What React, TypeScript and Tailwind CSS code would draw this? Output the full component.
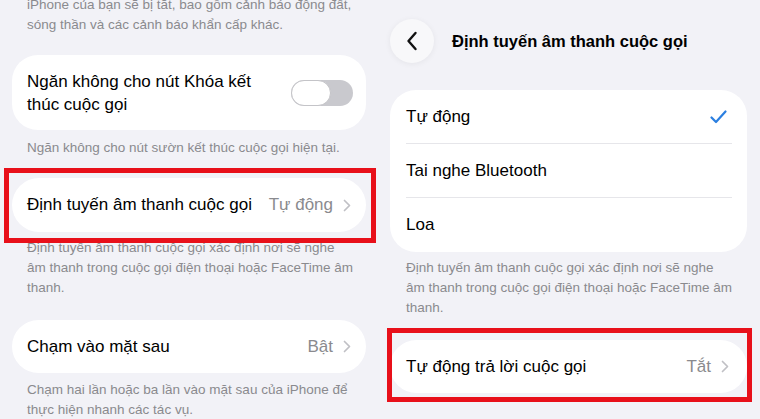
import { ReactNode } from "react";

const font = { fontFamily: "'Liberation Sans', Arial, sans-serif" };

function Chevron() {
  return (
    <svg width="8" height="13" viewBox="0 0 8 13" fill="none" className="shrink-0">
      <path d="M1.5 1.5 L6.5 6.5 L1.5 11.5" stroke="#c0c0c5" strokeWidth="1.7" strokeLinecap="round" strokeLinejoin="round" />
    </svg>
  );
}

function Note({ children, className = "" }: { children: ReactNode; className?: string }) {
  return (
    <p className={`whitespace-nowrap px-[15px] text-[13.5px] leading-[20px] text-[#8a8a8e] ${className}`}>{children}</p>
  );
}

function RedBox({ className }: { className: string }) {
  return <div className={`pointer-events-none absolute border-[5px] border-[#e8101a] ${className}`} />;
}

function LinkRow({ label, value }: { label: string; value: string }) {
  return (
    <div className="flex h-full items-center rounded-[27px] bg-white pl-[15px] pr-[15px]">
      <span className="text-[17px] text-black">{label}</span>
      <span className="ml-auto mr-[10px] text-[17px] text-[#8a8a8e]">{value}</span>
      <Chevron />
    </div>
  );
}

function Toggle() {
  return (
    <div className="relative h-[26px] w-[62px] shrink-0 rounded-full bg-[#c9c9ce]">
      <div className="absolute left-0 top-0 h-[26px] w-[40px] rounded-full border border-[#c4c4c8] bg-white" />
    </div>
  );
}

export default function App() {
  const options = ["Tự động", "Tai nghe Bluetooth", "Loa"];
  return (
    <div className="relative flex h-[419px] w-[760px] overflow-hidden bg-[#f2f2f7] antialiased" style={font}>
      {/* left screenshot */}
      <div className="w-[380px] shrink-0 pl-[12px] pr-[14px]">
        <Note className="-mt-[5px]">
          iPhone của bạn sẽ bị tắt, bao gồm cảnh báo động đất,
          <br />
          sóng thần và các cảnh báo khẩn cấp khác.
        </Note>
        <div className="mt-[20px] flex h-[75px] items-center rounded-[26px] bg-white pl-[15px] pr-[13px]">
          <span className="text-[17px] leading-[23px] text-black">
            Ngăn không cho nút Khóa kết
            <br />
            thúc cuộc gọi
          </span>
          <div className="ml-auto">
            <Toggle />
          </div>
        </div>
        <Note className="mt-[8px]">Ngăn không cho nút sườn kết thúc cuộc gọi hiện tại.</Note>
        <div className="mt-[20px] h-[54px]">
          <LinkRow label="Định tuyến âm thanh cuộc gọi" value="Tự động" />
        </div>
        <Note className="mt-[6px]">
          Định tuyến âm thanh cuộc gọi xác định nơi sẽ nghe
          <br />
          âm thanh trong cuộc gọi điện thoại hoặc FaceTime âm
          <br />
          thanh.
        </Note>
        <div className="mt-[22px] h-[53px]">
          <LinkRow label="Chạm vào mặt sau" value="Bật" />
        </div>
        <Note className="mt-[7px]">
          Chạm hai lần hoặc ba lần vào mặt sau của iPhone để
          <br />
          thực hiện nhanh các tác vụ.
        </Note>
      </div>

      {/* right screenshot */}
      <div className="w-[380px] shrink-0 pl-[10px] pr-[13px]">
        <div className="mt-[19px] flex items-center">
          <div className="flex h-[44px] w-[44px] items-center justify-center rounded-full bg-[#f8f8fa] shadow-[0_1px_6px_rgba(0,0,0,0.06)]">
            <svg width="12" height="20" viewBox="0 0 12 20" fill="none">
              <path d="M9.5 2 L2.5 10 L9.5 18" stroke="#111" strokeWidth="2.4" strokeLinecap="round" strokeLinejoin="round" />
            </svg>
          </div>
          <span className="ml-[18px] text-[16.5px] font-semibold text-black">Định tuyến âm thanh cuộc gọi</span>
        </div>
        <div className="mt-[27px] rounded-[26px] bg-white">
          {options.map((o, i) => (
            <div key={o} className="flex h-[54px] flex-col">
              <div className="flex flex-1 items-center pl-[16px] pr-[20px]">
                <span className="text-[17px] text-black">{o}</span>
                {i === 0 && (
                  <svg className="ml-auto" width="17" height="14" viewBox="0 0 17 14" fill="none">
                    <path d="M1.5 7.5 L6 12 L15.5 1.5" stroke="#2b7fe0" strokeWidth="2.2" strokeLinecap="round" strokeLinejoin="round" />
                  </svg>
                )}
              </div>
              {i < options.length - 1 && <div className="ml-[16px] mr-[15px] h-px bg-[#e6e6ea]" />}
            </div>
          ))}
        </div>
        <Note className="mt-[6px] !px-[16px] leading-[19.5px]">
          Định tuyến âm thanh cuộc gọi xác định nơi sẽ nghe
          <br />
          âm thanh trong cuộc gọi điện thoại hoặc FaceTime âm
          <br />
          thanh.
        </Note>
        <div className="mt-[22px] h-[53px]">
          <div className="flex h-full items-center rounded-[27px] bg-white pl-[16px] pr-[18px]">
            <span className="text-[17px] text-black">Tự động trả lời cuộc gọi</span>
            <span className="ml-auto mr-[10px] text-[17px] text-[#8a8a8e]">Tắt</span>
            <Chevron />
          </div>
        </div>
      </div>

      {/* highlight boxes drawn over the two screenshots */}
      <RedBox className="left-[4px] top-[168px] h-[75px] w-[372px]" />
      <RedBox className="left-[387px] top-[328px] h-[74px] w-[365px]" />
    </div>
  );
}
